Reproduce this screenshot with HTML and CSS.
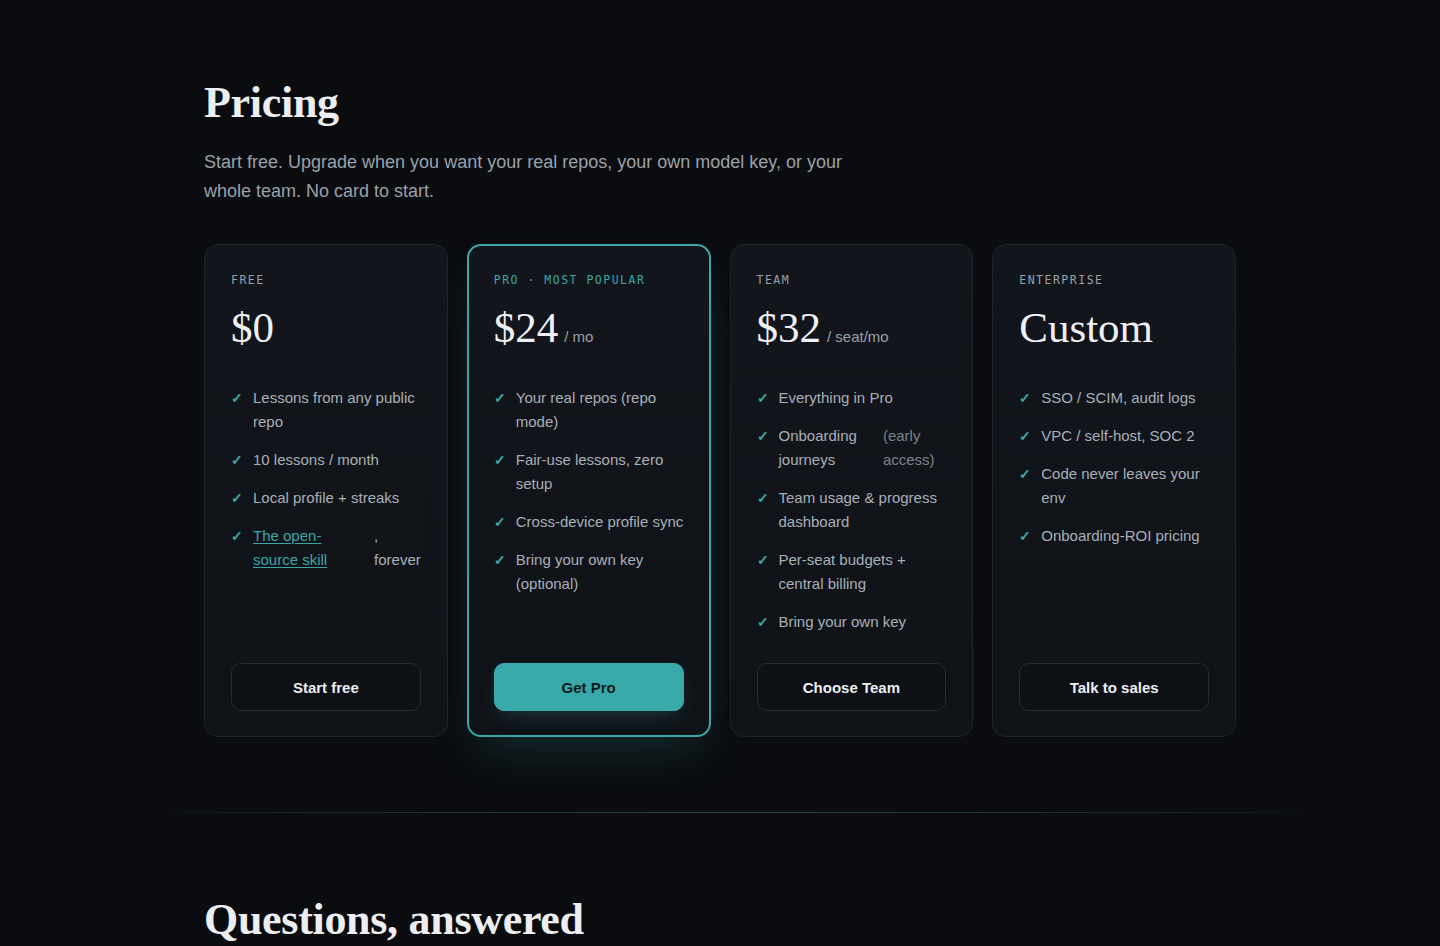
FILE: index.html
```html
<!DOCTYPE html>
<html lang="en">
<head>
<meta charset="utf-8">
<title>Pricing</title>
<link rel="stylesheet" href="styles.css">
</head>
<body>
<main class="page">
  <section class="pricing">
    <h1 class="title">Pricing</h1>
    <p class="lead">Start free. Upgrade when you want your real repos, your own model key, or your whole team. No card to start.</p>

    <div class="plans">
      <article class="plan">
        <div class="plan-label">FREE</div>
        <div class="price"><span class="amount">$0</span></div>
        <ul class="features">
          <li><span class="check">✓</span>Lessons from any public repo</li>
          <li><span class="check">✓</span>10 lessons / month</li>
          <li><span class="check">✓</span>Local profile + streaks</li>
          <li><span class="check">✓</span><a href="#" class="link">The open-source skill</a>, forever</li>
        </ul>
        <a href="#" class="btn">Start free</a>
      </article>

      <article class="plan plan-featured">
        <div class="plan-label label-accent">PRO · MOST POPULAR</div>
        <div class="price"><span class="amount">$24</span><span class="unit">/ mo</span></div>
        <ul class="features">
          <li><span class="check">✓</span>Your real repos (repo mode)</li>
          <li><span class="check">✓</span>Fair-use lessons, zero setup</li>
          <li><span class="check">✓</span>Cross-device profile sync</li>
          <li><span class="check">✓</span>Bring your own key (optional)</li>
        </ul>
        <a href="#" class="btn btn-primary">Get Pro</a>
      </article>

      <article class="plan">
        <div class="plan-label">TEAM</div>
        <div class="price"><span class="amount">$32</span><span class="unit">/ seat/mo</span></div>
        <ul class="features">
          <li><span class="check">✓</span>Everything in Pro</li>
          <li><span class="check">✓</span>Onboarding journeys <span class="muted">(early access)</span></li>
          <li><span class="check">✓</span>Team usage &amp; progress dashboard</li>
          <li><span class="check">✓</span>Per-seat budgets + central billing</li>
          <li><span class="check">✓</span>Bring your own key</li>
        </ul>
        <a href="#" class="btn">Choose Team</a>
      </article>

      <article class="plan">
        <div class="plan-label">ENTERPRISE</div>
        <div class="price"><span class="amount">Custom</span></div>
        <ul class="features">
          <li><span class="check">✓</span>SSO / SCIM, audit logs</li>
          <li><span class="check">✓</span>VPC / self-host, SOC 2</li>
          <li><span class="check">✓</span>Code never leaves your env</li>
          <li><span class="check">✓</span>Onboarding-ROI pricing</li>
        </ul>
        <a href="#" class="btn">Talk to sales</a>
      </article>
    </div>
  </section>

  <hr class="divider">

  <section class="faq">
    <h2 class="title">Questions, answered</h2>
  </section>
</main>
</body>
</html>
```

FILE: styles.css
```css
* { box-sizing: border-box; }

html, body {
  margin: 0;
  padding: 0;
  background: #0a0c10;
  color: #e8eaee;
  font-family: "Liberation Sans", Arial, sans-serif;
}

body { overflow: hidden; height: 946px; }

.page {
  width: 1032px;
  margin: 0 auto;
  padding-top: 79px;
}

.title {
  margin: 0;
  font-family: "Liberation Serif", "Times New Roman", serif;
  font-weight: 700;
  font-size: 44px;
  line-height: 1.1;
  color: #eceef1;
  letter-spacing: -0.3px;
}

.lead {
  margin: 21px 0 0;
  max-width: 650px;
  font-size: 18px;
  line-height: 29px;
  color: #9ba1aa;
}

.plans {
  margin-top: 38px;
  display: grid;
  grid-template-columns: repeat(4, 1fr);
  gap: 19px;
}

.plan {
  display: flex;
  flex-direction: column;
  padding: 27px 26px 25px;
  border: 1px solid #1b2528;
  border-radius: 14px;
  background: linear-gradient(180deg, #12161c 0%, #0f1318 100%);
}

.plan-featured {
  border: 2px solid #3ba6a6;
  padding: 26px 25px 24px;
  box-shadow: 0 22px 50px -12px rgba(59, 166, 166, 0.22);
}

.plan-label {
  font-family: "DejaVu Sans Mono", "Liberation Mono", monospace;
  font-size: 11.5px;
  line-height: 16px;
  letter-spacing: 1.5px;
  color: #9aa0a8;
}

.label-accent { color: #3ba6a6; }

.price {
  margin-top: 18px;
  height: 43px;
  display: flex;
  align-items: baseline;
  gap: 6px;
}

.amount {
  font-family: "Liberation Serif", "Times New Roman", serif;
  font-size: 43px;
  line-height: 43px;
  color: #eef0f3;
}

.unit {
  font-size: 15px;
  color: #9aa0a8;
}

.features {
  list-style: none;
  margin: 37px 0 29px;
  padding: 0;
  display: flex;
  flex-direction: column;
  gap: 14px;
}

.plan-featured .features { margin-right: -6px; }

.features li {
  display: flex;
  gap: 10px;
  font-size: 15px;
  line-height: 24px;
  color: #a9afb7;
}

.check {
  flex: 0 0 11px;
  color: #3ba6a6;
  font-size: 14px;
  font-weight: 700;
}

.link {
  color: #3ba6a6;
  text-decoration: underline;
  text-underline-offset: 2px;
}

.muted { color: #7c828b; }

.btn {
  margin-top: auto;
  display: flex;
  align-items: center;
  justify-content: center;
  height: 48px;
  border: 1px solid #252b33;
  border-radius: 10px;
  background: #0d1015;
  color: #eceef1;
  font-size: 15px;
  font-weight: 700;
  text-decoration: none;
}

.btn-primary {
  background: #3aa9a9;
  border-color: #3aa9a9;
  color: #0c1a1d;
  box-shadow: 0 8px 20px -8px rgba(58, 169, 169, 0.35);
}

.divider {
  width: 1180px;
  margin: 75px 0 0 -60px;
  height: 1px;
  border: 0;
  background: linear-gradient(90deg, rgba(40, 70, 72, 0) 0%, rgba(40, 72, 74, 0.5) 15%, rgba(50, 92, 92, 0.7) 50%, rgba(40, 72, 74, 0.5) 85%, rgba(40, 70, 72, 0) 100%);
}

.faq {
  padding-top: 83px;
}
```
